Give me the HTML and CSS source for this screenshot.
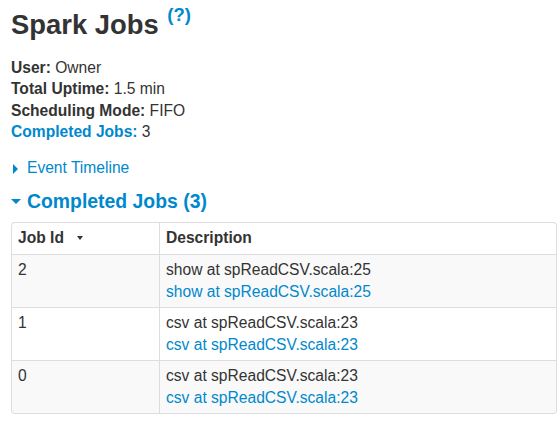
FILE: index.html
```html
<!DOCTYPE html>
<html>
<head>
<meta charset="utf-8">
<link rel="stylesheet" href="styles.css">
</head>
<body>
<div class="page">
  <h3 class="title">Spark Jobs <sup class="help"><a href="#">(?)</a></sup></h3>
  <ul class="info">
    <li><strong>User:</strong> Owner</li>
    <li><strong>Total Uptime:</strong> 1.5 min</li>
    <li><strong>Scheduling Mode:</strong> FIFO</li>
    <li><a href="#" class="info-link"><strong>Completed Jobs:</strong></a> 3</li>
  </ul>
  <div class="timeline"><span class="arrow-closed"></span><a href="#">Event Timeline</a></div>
  <h4 class="section"><span class="arrow-open"></span><a href="#">Completed Jobs (3)</a></h4>
  <table class="jobs">
    <thead>
      <tr><th class="col-id">Job Id<span class="sort"></span></th><th>Description</th></tr>
    </thead>
    <tbody>
      <tr class="odd"><td>2</td><td><span class="desc">show at spReadCSV.scala:25</span><a href="#" class="desc">show at spReadCSV.scala:25</a></td></tr>
      <tr><td>1</td><td><span class="desc">csv at spReadCSV.scala:23</span><a href="#" class="desc">csv at spReadCSV.scala:23</a></td></tr>
      <tr class="odd last"><td>0</td><td><span class="desc">csv at spReadCSV.scala:23</span><a href="#" class="desc">csv at spReadCSV.scala:23</a></td></tr>
    </tbody>
  </table>
</div>
</body>
</html>
```
FILE: styles.css
```css
html, body {
  margin: 0;
  padding: 0;
  background: #fff;
}
body {
  font-family: "Liberation Sans", Arial, sans-serif;
  font-size: 15.6px;
  line-height: 21.3px;
  color: #333;
}
a {
  color: #0088cc;
  text-decoration: none;
}
.page {
  padding: 10px 0 0 11px;
}
.title {
  margin: 0;
  font-size: 27.4px;
  line-height: 30px;
  font-weight: bold;
  color: #333;
}
.help {
  font-size: 18.5px;
  line-height: 0;
  vertical-align: 0;
  position: relative;
  top: -13px;
  margin-left: 1px;
}
.info {
  list-style: none;
  margin: 17px 0 0 0;
  padding: 0;
}
.info li {
  line-height: 21.4px;
}
.timeline {
  margin-top: 14px;
  line-height: 21.3px;
}
.arrow-closed {
  display: inline-block;
  width: 0;
  height: 0;
  border-top: 5px solid transparent;
  border-bottom: 5px solid transparent;
  border-left: 5px solid #0088cc;
  margin: 0 9px 0 2px;
  vertical-align: -1px;
}
.section {
  margin: 12px 0 0 0;
  font-size: 19.4px;
  line-height: 22px;
  font-weight: bold;
}
.arrow-open {
  display: inline-block;
  width: 0;
  height: 0;
  border-left: 5px solid transparent;
  border-right: 5px solid transparent;
  border-top: 5px solid #0088cc;
  margin: 0 6px 0 0;
  vertical-align: 4px;
}
.jobs {
  margin-top: 10px;
  width: 546px;
  border-collapse: separate;
  border-spacing: 0;
  border: 1px solid #ddd;
  border-left: 0;
  border-radius: 4px;
}
.jobs th, .jobs td {
  text-align: left;
  vertical-align: top;
  padding: 4.5px 6px;
  line-height: 21.6px;
  border-left: 1px solid #ddd;
  border-top: 1px solid #ddd;
}
.jobs thead th {
  border-top: 0;
  font-weight: bold;
}
.col-id {
  width: 135px;
}
.sort {
  display: inline-block;
  width: 0;
  height: 0;
  border-left: 3px solid transparent;
  border-right: 3px solid transparent;
  border-top: 4px solid #333;
  margin-left: 13px;
  vertical-align: 3px;
}
.jobs tr.odd td {
  background: #f9f9f9;
}
.desc {
  display: block;
}
.jobs thead tr th:first-child {
  border-top-left-radius: 4px;
}
.jobs tbody tr.last td:first-child {
  border-bottom-left-radius: 4px;
}
.jobs tbody tr.last td:last-child {
  border-bottom-right-radius: 4px;
}
```
